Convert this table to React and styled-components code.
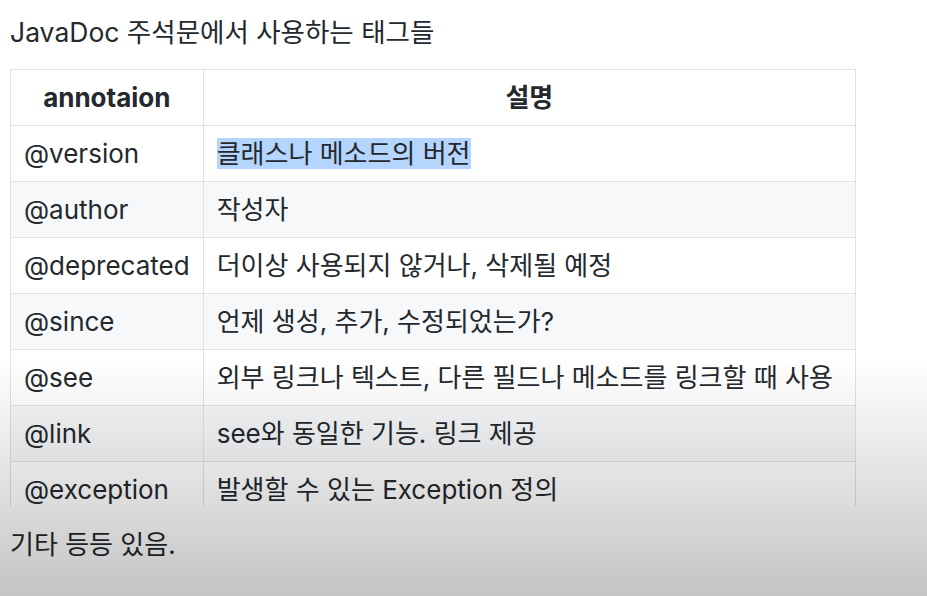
import React from "react";
import styled, { createGlobalStyle } from "styled-components";

const GlobalStyle = createGlobalStyle`
  html, body {
    margin: 0;
    padding: 0;
    background: #ffffff;
  }
  body {
    font-family: "Inter", "Noto Sans CJK KR", sans-serif;
    color: #24292e;
  }
`;

const Page = styled.div`
  width: 927px;
  height: 596px;
  padding: 14px 0 0 10px;
  box-sizing: border-box;
  overflow: hidden;
`;

const Title = styled.p`
  margin: 0 0 18px;
  font-size: 26.5px;
  line-height: 37px;
`;

const TableClip = styled.div`
  width: 846px;
  height: 437px;
  overflow: hidden;
`;

const Table = styled.table`
  width: 846px;
  border-collapse: collapse;
  font-size: 26px;
`;

const Row = styled.tr`
  background: ${(p) => (p.$striped ? "#f6f8fa" : "#ffffff")};
`;

const HeadCell = styled.th`
  border: 1px solid #dfe2e5;
  padding: 13px 13px;
  line-height: 29px;
  font-weight: 700;
  text-align: center;
  width: ${(p) => p.$width || "auto"};
`;

const Cell = styled.td`
  border: 1px solid #dfe2e5;
  padding: 13px 13px;
  line-height: 29px;
  white-space: nowrap;
`;

const Selected = styled.span`
  background: #b4d5fe;
`;

const Footer = styled.p`
  margin: 20px 0 0;
  font-size: 26px;
  line-height: 37px;
`;

const Shade = styled.div`
  position: fixed;
  left: 0;
  right: 0;
  top: 360px;
  height: 236px;
  pointer-events: none;
  background: linear-gradient(
    to bottom,
    rgba(0, 0, 0, 0) 0%,
    rgba(0, 0, 0, 0.1) 45%,
    rgba(0, 0, 0, 0.23) 100%
  );
`;

const rows = [
  ["@version", "클래스나 메소드의 버전", true],
  ["@author", "작성자"],
  ["@deprecated", "더이상 사용되지 않거나, 삭제될 예정"],
  ["@since", "언제 생성, 추가, 수정되었는가?"],
  ["@see", "외부 링크나 텍스트, 다른 필드나 메소드를 링크할 때 사용"],
  ["@link", "see와 동일한 기능. 링크 제공"],
  ["@exception", "발생할 수 있는 Exception 정의"],
];

export default function App() {
  return (
    <>
      <GlobalStyle />
      <Page>
        <Title>JavaDoc 주석문에서 사용하는 태그들</Title>
        <TableClip>
          <Table>
            <thead>
              <Row>
                <HeadCell $width="165px">annotaion</HeadCell>
                <HeadCell>설명</HeadCell>
              </Row>
            </thead>
            <tbody>
              {rows.map(([tag, desc, sel], i) => (
                <Row key={tag} $striped={i % 2 === 1}>
                  <Cell>{tag}</Cell>
                  <Cell>{sel ? <Selected>{desc}</Selected> : desc}</Cell>
                </Row>
              ))}
            </tbody>
          </Table>
        </TableClip>
        <Footer>기타 등등 있음.</Footer>
      </Page>
      <Shade />
    </>
  );
}
